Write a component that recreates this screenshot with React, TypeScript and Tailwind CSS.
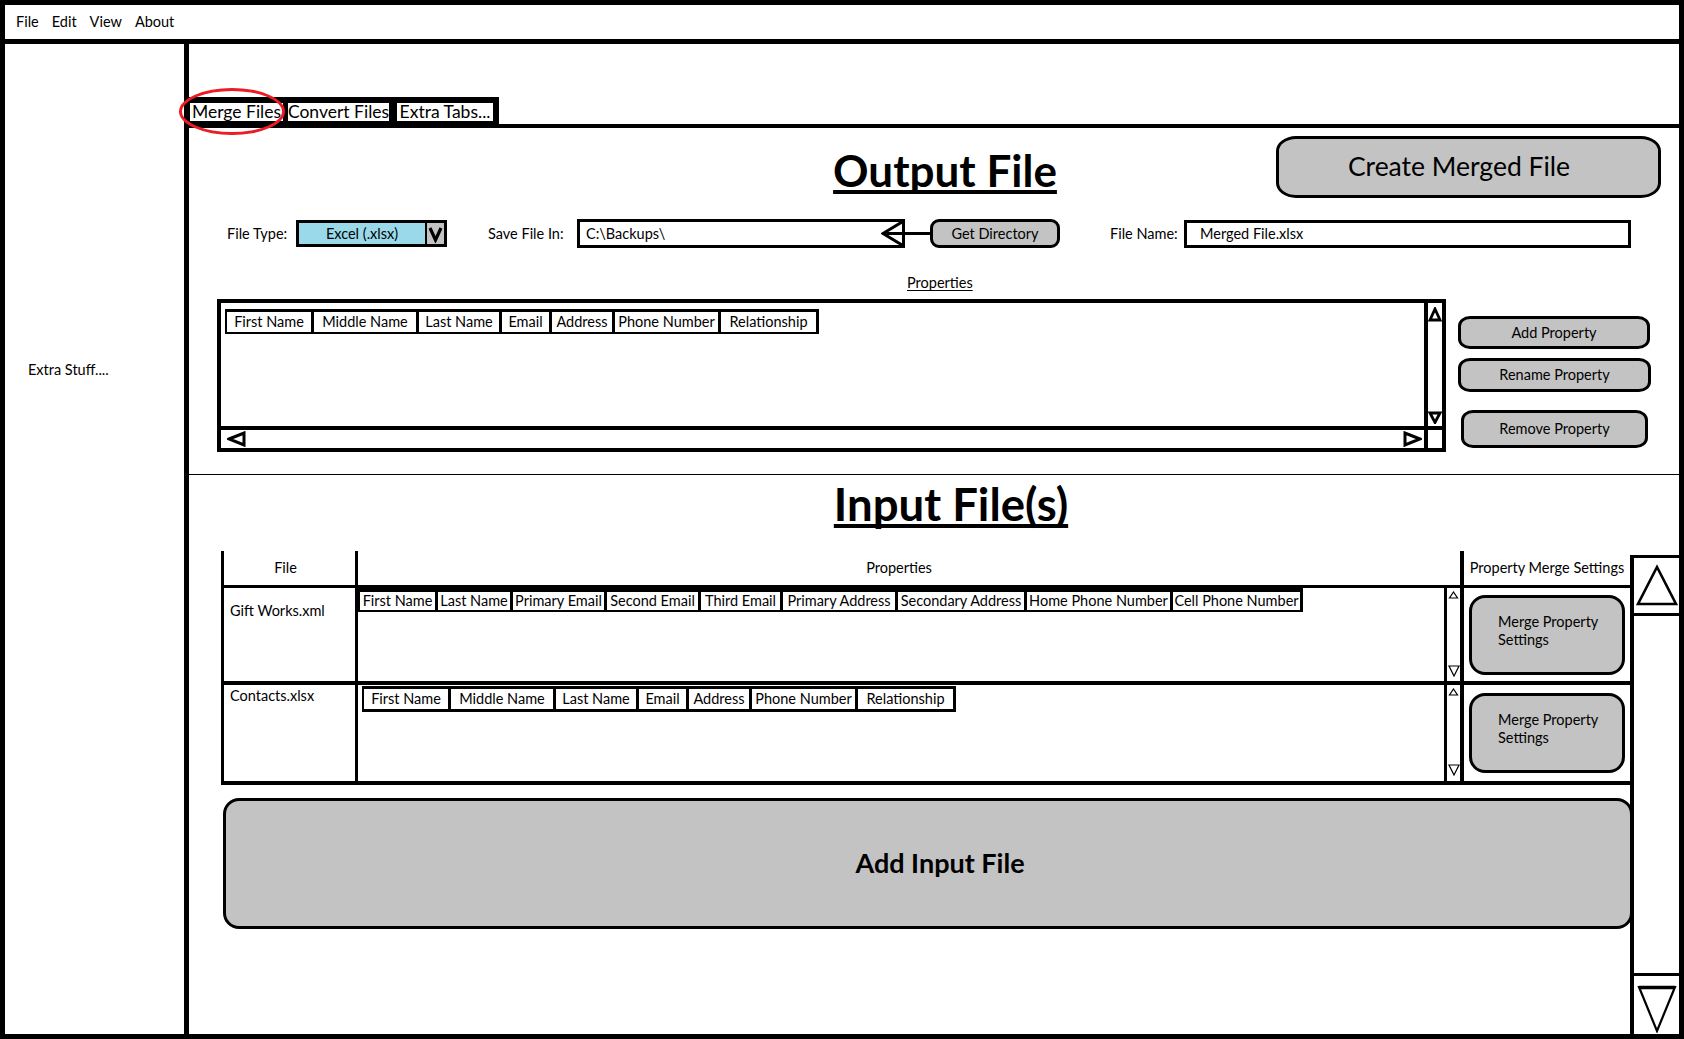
import React from "react";

type CellDef = [string, number];

const propsCells: CellDef[] = [
  ["First Name", 84],
  ["Middle Name", 102],
  ["Last Name", 80],
  ["Email", 47],
  ["Address", 60],
  ["Phone Number", 103],
  ["Relationship", 95],
];

const giftCells: CellDef[] = [
  ["First Name", 75],
  ["Last Name", 72],
  ["Primary Email", 91],
  ["Second Email", 91],
  ["Third Email", 79],
  ["Primary Address", 112],
  ["Secondary Address", 126],
  ["Home Phone Number", 143],
  ["Cell Phone Number", 127],
];

function Strip({
  cells,
  cellH,
  className,
}: {
  cells: CellDef[];
  cellH: string;
  className: string;
}) {
  return (
    <div className={`inline-flex bg-black gap-[3px] ${className}`}>
      {cells.map(([t, w]) => (
        <div
          key={t}
          className={`bg-white ${cellH} flex items-center justify-center whitespace-nowrap text-[14.5px] leading-none`}
          style={{ width: w }}
        >
          {t}
        </div>
      ))}
    </div>
  );
}

function TinyUp() {
  return (
    <svg width="11" height="8" viewBox="0 0 11 8">
      <polygon points="5.5,1 9.5,7 1.5,7" fill="white" stroke="black" strokeWidth="1.2" />
    </svg>
  );
}

function TinyDown() {
  return (
    <svg width="12" height="12" viewBox="0 0 12 12">
      <polygon points="1,1 11,1 6,11" fill="white" stroke="black" strokeWidth="1.2" />
    </svg>
  );
}

function MergeButton() {
  return (
    <div className="w-full h-[80px] bg-[#c3c3c3] border-[3px] border-black rounded-[16px] pl-[26px] pt-[15px] text-[14.5px] leading-[18px]">
      <div>Merge Property</div>
      <div>Settings</div>
    </div>
  );
}

function SideButton({ label, cls }: { label: string; cls: string }) {
  return (
    <div
      className={`bg-[#c3c3c3] border-[3px] border-black rounded-[12px_/_10px] flex items-center justify-center text-[14.5px] ${cls}`}
    >
      {label}
    </div>
  );
}

export default function App() {
  return (
    <div className="w-[1684px] h-[1039px] overflow-hidden bg-white border-[5px] border-black flex flex-col font-['Lato',sans-serif] text-black">
      {/* Menu bar */}
      <div className="h-[39px] shrink-0 border-b-[5px] border-black flex items-center pl-[11px] gap-[13px] text-[14.5px]">
        <span>File</span>
        <span>Edit</span>
        <span>View</span>
        <span>About</span>
      </div>

      <div className="flex flex-1 min-h-0">
        {/* Sidebar */}
        <aside className="w-[184px] shrink-0 border-r-[5px] border-black pl-[23px] pt-[315px] text-[14.5px]">
          Extra Stuff....
        </aside>

        {/* Main */}
        <main className="flex-1 min-w-0 flex flex-col">
          <div className="h-[53px] shrink-0" />

          {/* Tabs */}
          <div className="flex shrink-0">
            <div className="relative bg-black flex pl-[1px] pr-[6px] pt-[6px] pb-[3px] text-[17.5px] leading-[18px]">
              <div className="w-[93px] h-[18px] bg-white flex items-center justify-center whitespace-nowrap">
                Merge Files
              </div>
              <div className="ml-[5px] w-[101px] h-[18px] bg-white flex items-center justify-center whitespace-nowrap">
                Convert Files
              </div>
              <div className="ml-[8px] w-[96px] h-[18px] bg-white flex items-center justify-center whitespace-nowrap">
                Extra Tabs...
              </div>
              <div className="pointer-events-none absolute left-[-10px] top-[-9px] w-[106px] h-[47px] rounded-[50%] border-[3px] border-[#ed1c24]" />
            </div>
          </div>
          <div className="h-[4px] bg-black shrink-0" />

          {/* Output title row */}
          <div className="flex items-start pt-[8px] shrink-0">
            <div className="ml-[606px] w-[300px] mt-[8px] text-center text-[44px] leading-[53px] font-bold underline decoration-[4px] underline-offset-[3px] [text-decoration-skip-ink:none]">
              Output File
            </div>
            <div className="ml-auto mr-[18px] w-[385px] h-[62px] bg-[#c3c3c3] border-[3px] border-black rounded-[20px_/_15px] flex items-center justify-center pr-[19px] text-[26.5px]">
              Create Merged File
            </div>
          </div>

          {/* File row */}
          <div className="flex items-center mt-[21px] h-[29px] pl-[38px] text-[14.5px] shrink-0">
            <span className="w-[69px] whitespace-nowrap">File Type:</span>
            <div className="w-[151px] h-[27px] border-[3px] border-black flex bg-black">
              <div className="flex-1 bg-[#99d9ea] flex items-center justify-center">Excel (.xlsx)</div>
              <div className="ml-[2px] w-[17px] bg-[#c3c3c3] flex items-center justify-center">
                <svg width="15" height="19" viewBox="0 0 15 19">
                  <polyline points="2,4 7.5,16 13,4" fill="none" stroke="black" strokeWidth="3.2" />
                </svg>
              </div>
            </div>
            <span className="ml-[41px] w-[89px] whitespace-nowrap">Save File In:</span>
            <div className="w-[328px] h-[29px] border-[3px] border-black flex items-center justify-between pl-[6px]">
              <span>C:\Backups\</span>
              <svg width="21" height="23" viewBox="0 0 21 23" className="shrink-0">
                <polyline points="21,0 2,11.5 21,23" fill="none" stroke="black" strokeWidth="3" />
                <line x1="2" y1="11.5" x2="21" y2="11.5" stroke="black" strokeWidth="3" />
              </svg>
            </div>
            <div className="w-[25px] h-[3px] bg-black" />
            <div className="w-[130px] h-[29px] bg-[#c3c3c3] border-[3px] border-black rounded-[9px] flex items-center justify-center">
              Get Directory
            </div>
            <span className="ml-[50px] w-[74px] whitespace-nowrap">File Name:</span>
            <div className="w-[447px] h-[28px] border-[3px] border-black flex items-center pl-[13px]">
              Merged File.xlsx
            </div>
          </div>

          {/* Properties label */}
          <div className="mt-[26px] pl-[718px] text-[14.5px] leading-[17px] shrink-0">
            <span className="underline underline-offset-[2px]">Properties</span>
          </div>

          {/* Properties row */}
          <div className="flex mt-[8px] pl-[28px] shrink-0">
            <div className="w-[1229px] h-[153px] border-[4px] border-black flex flex-col">
              <div className="flex flex-1 min-h-0">
                <div className="flex-1 min-w-0 pl-[4px] pt-[6px]">
                  <Strip cells={propsCells} cellH="h-[20px]" className="pl-[2px] pt-[3px] pr-[3px] pb-[2px]" />
                </div>
                <div className="w-[18px] border-l-[4px] border-black flex flex-col items-center justify-between pt-[4px] pb-[2px]">
                  <svg width="14" height="15" viewBox="0 0 14 15">
                    <polygon points="7,2 12,13 2,13" fill="white" stroke="black" strokeWidth="2.8" strokeLinejoin="miter" />
                  </svg>
                  <svg width="14" height="13" viewBox="0 0 14 13">
                    <polygon points="2,2 12,2 7,11.5" fill="white" stroke="black" strokeWidth="2.8" />
                  </svg>
                </div>
              </div>
              <div className="h-[22px] border-t-[4px] border-black flex">
                <div className="flex-1 flex items-center justify-between pl-[6px] pr-[2px]">
                  <svg width="19" height="16" viewBox="0 0 19 16">
                    <polygon points="2,8 17,2 17,14" fill="white" stroke="black" strokeWidth="3" />
                  </svg>
                  <svg width="19" height="16" viewBox="0 0 19 16">
                    <polygon points="17,8 2,2 2,14" fill="white" stroke="black" strokeWidth="3" />
                  </svg>
                </div>
                <div className="w-[18px] border-l-[4px] border-black" />
              </div>
            </div>
            <div className="ml-[12px] flex flex-col w-[193px] pt-[17px]">
              <SideButton label="Add Property" cls="h-[33px] w-[192px]" />
              <SideButton label="Rename Property" cls="mt-[9px] h-[34px] w-[193px]" />
              <SideButton label="Remove Property" cls="mt-[18px] ml-[3px] h-[38px] w-[187px]" />
            </div>
          </div>

          {/* Divider */}
          <div className="mt-[22px] h-[1px] bg-black shrink-0" />

          {/* Input title */}
          <div className="mt-[2px] ml-[612px] w-[300px] text-center text-[45.5px] leading-[53px] font-bold shrink-0">
            <span className="underline decoration-[4px] underline-offset-[3px] [text-decoration-skip-ink:none]">
              Input File(s)
            </span>
          </div>

          {/* Input body */}
          <div className="flex flex-1 min-h-0">
            <div className="flex-1 min-w-0 pl-[32px] pt-[21px] flex flex-col">
              {/* Table */}
              <div className="flex flex-col text-[14.5px]">
                <div className="flex h-[37px] border-l-[3px] border-b-[3px] border-black">
                  <div className="w-[134px] border-r-[3px] border-black flex items-center justify-center pr-[8px]">File</div>
                  <div className="flex-1 flex items-center justify-center pr-[20px]">Properties</div>
                  <div className="w-[170px] border-l-[4px] border-black flex items-center justify-center whitespace-nowrap">
                    Property Merge Settings
                  </div>
                </div>

                <div className="flex h-[97px] border-l-[3px] border-b-[4px] border-black">
                  <div className="w-[134px] border-r-[3px] border-black pl-[6px] pt-[12px]">Gift Works.xml</div>
                  <div className="flex-1 min-w-0">
                    <Strip cells={giftCells} cellH="h-[18px]" className="pl-[2px] pt-[4px] pr-[3px] pb-[2px]" />
                  </div>
                  <div className="w-[16px] border-l-[3px] border-black flex flex-col items-center justify-between pt-[3px] pb-[4px]">
                    <TinyUp />
                    <TinyDown />
                  </div>
                  <div className="w-[170px] border-l-[4px] border-black flex items-center px-[5px]">
                    <MergeButton />
                  </div>
                </div>

                <div className="flex h-[100px] border-l-[3px] border-b-[4px] border-black">
                  <div className="w-[134px] border-r-[3px] border-black pl-[6px]">Contacts.xlsx</div>
                  <div className="flex-1 min-w-0">
                    <Strip cells={propsCells} cellH="h-[20px]" className="ml-[4px] mt-[1px] pl-[2px] pt-[3px] pr-[3px] pb-[3px]" />
                  </div>
                  <div className="w-[16px] border-l-[3px] border-black flex flex-col items-center justify-between pt-[3px] pb-[5px]">
                    <TinyUp />
                    <TinyDown />
                  </div>
                  <div className="w-[170px] border-l-[4px] border-black flex items-center px-[5px]">
                    <MergeButton />
                  </div>
                </div>
              </div>

              {/* Add Input File */}
              <div className="mt-[13px] ml-[2px] mr-[-3px] h-[131px] bg-[#c3c3c3] border-[3px] border-black rounded-[16px] flex items-center justify-center pl-[24px] text-[27px] font-bold">
                Add Input File
              </div>
            </div>

            {/* Right scrollbar */}
            <div className="w-[49px] shrink-0 mt-[25px] border-l-[4px] border-t-[3px] border-black flex flex-col">
              <div className="h-[58px] border-b-[3px] border-black flex items-center justify-center">
                <svg width="42" height="43" viewBox="0 0 42 43">
                  <polygon points="21,3 40,40 2,40" fill="white" stroke="black" strokeWidth="2.6" />
                </svg>
              </div>
              <div className="flex-1" />
              <div className="h-[61px] border-t-[3px] border-black flex justify-center pt-[9px]">
                <svg width="40" height="48" viewBox="0 0 40 48">
                  <polygon points="2,2 38,2 20,46" fill="white" stroke="black" strokeWidth="2.2" />
                  <line x1="2" y1="2.5" x2="38" y2="2.5" stroke="black" strokeWidth="3.5" />
                </svg>
              </div>
            </div>
          </div>
        </main>
      </div>
    </div>
  );
}
